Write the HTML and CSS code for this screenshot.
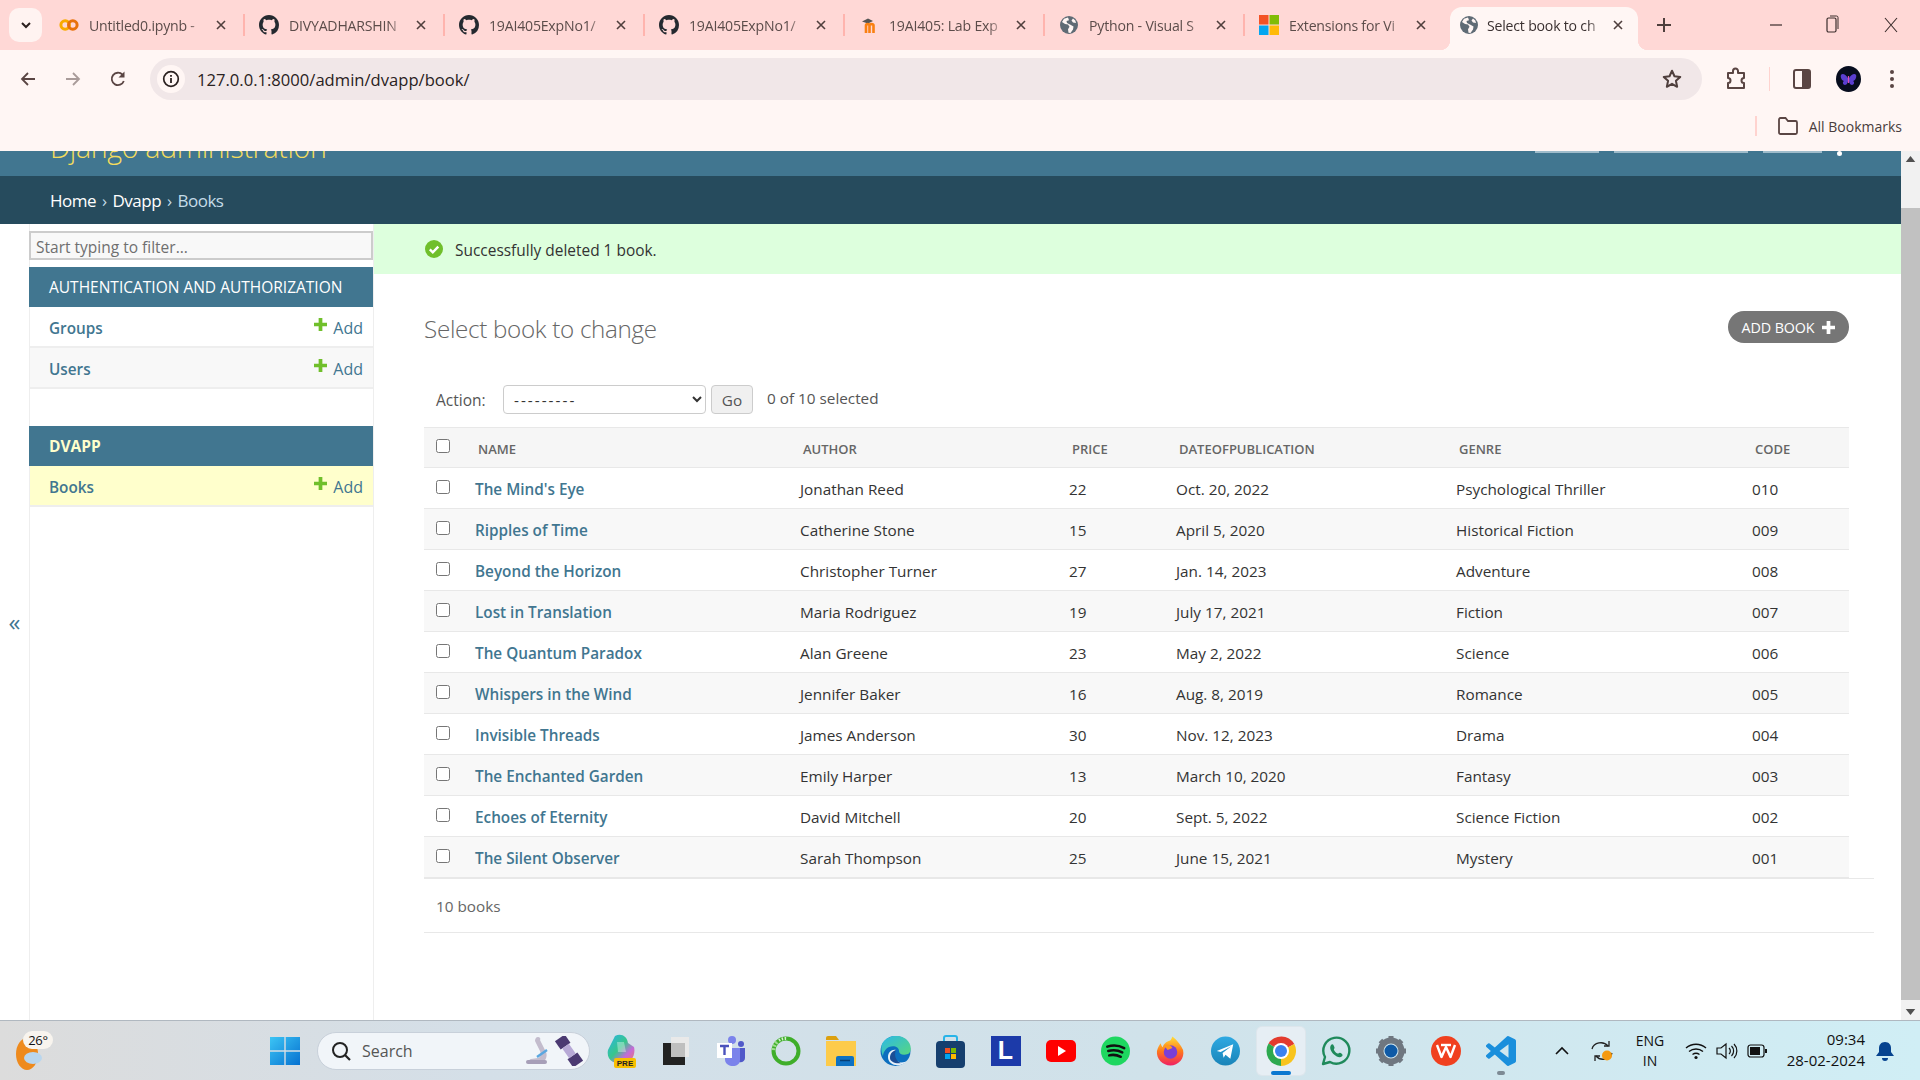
FILE: index.html
```html
<!DOCTYPE html>
<html lang="en">
<head>
<meta charset="utf-8">
<title>Select book to change | Django site admin</title>
<link rel="stylesheet" href="styles.css">
</head>
<body>
<svg class="defs" aria-hidden="true">
  <symbol id="gh" viewBox="0 0 16 16"><path fill="#24292f" d="M8 0C3.58 0 0 3.58 0 8c0 3.54 2.29 6.53 5.47 7.59.4.07.55-.17.55-.38 0-.19-.01-.82-.01-1.49-2.01.37-2.53-.49-2.69-.94-.09-.23-.48-.94-.82-1.13-.28-.15-.68-.52-.01-.53.63-.01 1.08.58 1.23.82.72 1.21 1.87.87 2.33.66.07-.52.28-.87.51-1.07-1.78-.2-3.64-.89-3.64-3.95 0-.87.31-1.59.82-2.15-.08-.2-.36-1.02.08-2.12 0 0 .67-.21 2.2.82.64-.18 1.32-.27 2-.27.68 0 1.36.09 2 .27 1.53-1.04 2.2-.82 2.2-.82.44 1.1.16 1.92.08 2.12.51.56.82 1.27.82 2.15 0 3.07-1.87 3.75-3.65 3.95.29.25.54.73.54 1.48 0 1.07-.01 1.93-.01 2.2 0 .21.15.46.55.38A8.013 8.013 0 0016 8c0-4.42-3.58-8-8-8z"/></symbol>
  <symbol id="globe" viewBox="0 0 20 20"><circle cx="10" cy="10" r="9" fill="#5f6b75"/><path fill="#fff6f4" d="M9 2.500 5 3.800 3 7l3 2 3 .5 1.500 2.200-1.500 2.500.5 3.500 2 .2 2.500-3.500.5-3-3.500-2L8 8l-.5-2L10 5.200zM14 3.500l-1.500 2 1.500 2 3 .5-.7-2.500z"/></symbol>
  <symbol id="close" viewBox="0 0 12 12"><path d="M2 2l8 8M10 2l-8 8" fill="none" stroke="#4f3f3d" stroke-width="1.600"/></symbol>
  <symbol id="plus" viewBox="0 0 14 14"><path d="M5 0h4v5h5v4H9v5H5V9H0V5h5z" fill="#70bf2b"/></symbol>
</svg>

<header class="tabstrip">
  <button class="tabsearch"><svg width="12" height="12" viewBox="0 0 12 12"><path d="M2 4l4 4 4-4" fill="none" stroke="#2b1f1e" stroke-width="2"/></svg></button>
  <div class="tab">
    <svg class="fav" viewBox="0 0 20 20"><circle cx="6.200" cy="10" r="4.300" fill="none" stroke="#f9ab00" stroke-width="3"/><circle cx="13.800" cy="10" r="4.300" fill="none" stroke="#e8710a" stroke-width="3"/></svg>
    <span class="tabtext">Untitled0.ipynb -</span>
    <svg class="tabx"><use href="#close"/></svg>
  </div>
  <i class="sep"></i>
  <div class="tab">
    <svg class="fav"><use href="#gh"/></svg>
    <span class="tabtext">DIVYADHARSHIN</span>
    <svg class="tabx"><use href="#close"/></svg>
  </div>
  <i class="sep"></i>
  <div class="tab">
    <svg class="fav"><use href="#gh"/></svg>
    <span class="tabtext">19AI405ExpNo1/</span>
    <svg class="tabx"><use href="#close"/></svg>
  </div>
  <i class="sep"></i>
  <div class="tab">
    <svg class="fav"><use href="#gh"/></svg>
    <span class="tabtext">19AI405ExpNo1/</span>
    <svg class="tabx"><use href="#close"/></svg>
  </div>
  <i class="sep"></i>
  <div class="tab">
    <svg class="fav" viewBox="0 0 20 20"><path d="M3 6.500 9 3.500l5 2.500-5 2.500z" fill="#555"/><path d="M7 18v-7.500c0-2 3.500-2 3.500 0V18M10.500 10.500c0-2 4-2 4 0V18" fill="none" stroke="#f98012" stroke-width="2.600"/></svg>
    <span class="tabtext">19AI405: Lab Exp</span>
    <svg class="tabx"><use href="#close"/></svg>
  </div>
  <i class="sep"></i>
  <div class="tab">
    <svg class="fav"><use href="#globe"/></svg>
    <span class="tabtext">Python - Visual S</span>
    <svg class="tabx"><use href="#close"/></svg>
  </div>
  <i class="sep"></i>
  <div class="tab">
    <svg class="fav" viewBox="0 0 20 20"><rect width="9.500" height="9.500" fill="#f35325"/><rect x="10.500" width="9.500" height="9.500" fill="#81bc06"/><rect y="10.500" width="9.500" height="9.500" fill="#05a6f0"/><rect x="10.500" y="10.500" width="9.500" height="9.500" fill="#ffba08"/></svg>
    <span class="tabtext">Extensions for Vi</span>
    <svg class="tabx"><use href="#close"/></svg>
  </div>
  <div class="tab active">
    <svg class="fav"><use href="#globe"/></svg>
    <span class="tabtext">Select book to ch</span>
    <svg class="tabx"><use href="#close"/></svg>
  </div>
  <svg class="newtab" viewBox="0 0 24 24"><path d="M12 5v14M5 12h14" stroke="#4f3f3d" stroke-width="2" fill="none"/></svg>
  <div class="winctl">
    <span class="winbtn"><svg width="14" height="14" viewBox="0 0 14 14"><path d="M1 7h12" stroke="#3a2c2b" stroke-width="1.200"/></svg></span>
    <span class="winbtn"><svg width="14" height="24" viewBox="0 0 14 24"><rect x="2" y="5" width="9" height="14" rx="1.500" fill="none" stroke="#3a2c2b" stroke-width="1.200"/><path d="M5 3h6.500a1.500 1.500 0 0 1 1.500 1.500V16" fill="none" stroke="#3a2c2b" stroke-width="1"/></svg></span>
    <span class="winbtn"><svg width="14" height="16" viewBox="0 0 14 16"><path d="M1 1l12 14M13 1L1 15" stroke="#3a2c2b" stroke-width="1.100" fill="none"/></svg></span>
  </div>
</header>

<section class="toolbar">
  <div class="navrow">
    <span class="navbtn"><svg width="18" height="18" viewBox="0 0 18 18"><path d="M16 9H3M9 3 3 9l6 6" fill="none" stroke="#5a4543" stroke-width="1.800"/></svg></span>
    <span class="navbtn"><svg width="18" height="18" viewBox="0 0 18 18"><path d="M2 9h13M9 3l6 6-6 6" fill="none" stroke="#a99b99" stroke-width="1.800"/></svg></span>
    <span class="navbtn"><svg width="18" height="18" viewBox="0 0 18 18"><path d="M14.800 11a6.200 6.200 0 1 1-1.300-6.300" fill="none" stroke="#5a4543" stroke-width="1.800"/><path d="M15.500 1.500v6h-6z" fill="#5a4543"/></svg></span>
    <div class="omnibox">
      <span class="siteinfo"><svg width="18" height="18" viewBox="0 0 18 18"><circle cx="9" cy="9" r="7.300" fill="none" stroke="#2b2120" stroke-width="1.700"/><path d="M9 8v5M9 5v1.800" stroke="#2b2120" stroke-width="1.800"/></svg></span>
      <span class="url">127.0.0.1:8000/admin/dvapp/book/</span>
      <svg class="star" width="22" height="22" viewBox="0 0 24 24"><path d="m12 3 2.700 6 6.300.7-4.700 4.300 1.300 6.500-5.600-3.300-5.600 3.300L7.700 14 3 9.700 9.300 9z" fill="none" stroke="#4f3f3d" stroke-width="2.200" stroke-linejoin="round"/></svg>
    </div>
    <div class="toolright">
      <span class="toolbtn"><svg width="22" height="24" viewBox="0 0 22 24"><path d="M3 6h5V4a2.500 2.500 0 0 1 5 0v2h6v5a2 2 0 0 0 0 5v5H3v-5a2.500 2.500 0 0 0 0-5z" fill="none" stroke="#5a4543" stroke-width="2" stroke-linejoin="round"/></svg></span>
      <i class="tooldiv"></i>
      <span class="toolbtn"><svg width="20" height="22" viewBox="0 0 20 22"><rect x="2" y="2" width="16" height="18" rx="2" fill="none" stroke="#5a4543" stroke-width="2"/><rect x="10" y="2" width="8" height="18" fill="#5a4543"/></svg></span>
      <span class="toolbtn avatarslot"><svg width="25" height="26" viewBox="0 0 25 26"><ellipse cx="12.500" cy="13" rx="12.500" ry="13" fill="#070d1e"/><path d="M12.500 13C10 8 6 7 5 9s1 6 3 6c-2 1-1 4 1 4s3-3 3.500-6c.5 3 1.500 6 3.500 6s3-3 1-4c2 0 4-4 3-6s-5-1-7.500 4z" fill="#5a3fd0"/><path d="M12.500 10v7" stroke="#e04fb0" stroke-width="1.200"/></svg></span>
      <span class="toolbtn"><svg width="6" height="20" viewBox="0 0 6 20"><circle cx="3" cy="3" r="2" fill="#5a4543"/><circle cx="3" cy="10" r="2" fill="#5a4543"/><circle cx="3" cy="17" r="2" fill="#5a4543"/></svg></span>
    </div>
  </div>
  <div class="bookmarks">
    <i class="bmdiv"></i>
    <svg class="bmfolder" width="22" height="20" viewBox="0 0 22 20"><path d="M2 3.500a1.500 1.500 0 0 1 1.500-1.500h5l2.500 3h7.500A1.500 1.500 0 0 1 20 6.500V16.500a1.500 1.500 0 0 1-1.500 1.500h-15A1.500 1.500 0 0 1 2 16.500z" fill="none" stroke="#5a4543" stroke-width="1.800"/></svg>
    <span class="bmtext">All Bookmarks</span>
  </div>
</section>

<div class="viewport">
  <div class="page">
    <div class="adminheader">
      <div class="branding">Django administration</div>
      <div class="usertools"><span class="ut1"></span><span class="ut2"></span><span class="ut3"></span><span class="ut4"></span></div>
    </div>
    <nav class="breadcrumbs"><a>Home</a> › <a>Dvapp</a> › <span>Books</span></nav>
    <div class="main">
      <div class="gutter"><span class="toggle">«</span></div>
      <aside class="sidebar">
        <input class="filter" type="text" placeholder="Start typing to filter...">
        <div class="appcaption">Authentication and Authorization</div>
        <div class="modelrow"><a class="modelname">Groups</a><a class="addlink"><svg class="plus"><use href="#plus"/></svg>Add</a></div>
        <div class="modelrow stripe"><a class="modelname">Users</a><a class="addlink"><svg class="plus"><use href="#plus"/></svg>Add</a></div>
        <div class="appcaption current">Dvapp</div>
        <div class="modelrow currentmodel"><a class="modelname">Books</a><a class="addlink"><svg class="plus"><use href="#plus"/></svg>Add</a></div>
      </aside>
      <main class="content">
        <div class="message"><svg width="18" height="18" viewBox="0 0 18 18"><circle cx="9" cy="9" r="9" fill="#70bf2b"/><path d="m4.800 9.300 3 3 5.500-5.700" fill="none" stroke="#fff" stroke-width="2.400"/></svg><span>Successfully deleted 1 book.</span></div>
        <div class="inner">
          <div class="titlerow">
            <h1>Select book to change</h1>
            <a class="addbtn">ADD BOOK<svg width="13" height="13" viewBox="0 0 14 14"><path d="M5 0h4v5h5v4H9v5H5V9H0V5h5z" fill="#fff"/></svg></a>
          </div>
          <div class="actions">
            <label class="actionlabel">Action:</label>
            <select class="actionselect"><option>---------</option></select>
            <button class="gobtn">Go</button>
            <span class="selected">0 of 10 selected</span>
          </div>
          <table class="results">
            <colgroup><col class="c0"><col class="c1"><col class="c2"><col class="c3"><col class="c4"><col class="c5"><col class="c6"></colgroup>
            <thead><tr><th><input type="checkbox"></th><th>Name</th><th>Author</th><th>Price</th><th>Dateofpublication</th><th>Genre</th><th>Code</th></tr></thead>
            <tbody>
              <tr><td><input type="checkbox"></td><td><a>The Mind's Eye</a></td><td>Jonathan Reed</td><td>22</td><td>Oct. 20, 2022</td><td>Psychological Thriller</td><td>010</td></tr>
              <tr><td><input type="checkbox"></td><td><a>Ripples of Time</a></td><td>Catherine Stone</td><td>15</td><td>April 5, 2020</td><td>Historical Fiction</td><td>009</td></tr>
              <tr><td><input type="checkbox"></td><td><a>Beyond the Horizon</a></td><td>Christopher Turner</td><td>27</td><td>Jan. 14, 2023</td><td>Adventure</td><td>008</td></tr>
              <tr><td><input type="checkbox"></td><td><a>Lost in Translation</a></td><td>Maria Rodriguez</td><td>19</td><td>July 17, 2021</td><td>Fiction</td><td>007</td></tr>
              <tr><td><input type="checkbox"></td><td><a>The Quantum Paradox</a></td><td>Alan Greene</td><td>23</td><td>May 2, 2022</td><td>Science</td><td>006</td></tr>
              <tr><td><input type="checkbox"></td><td><a>Whispers in the Wind</a></td><td>Jennifer Baker</td><td>16</td><td>Aug. 8, 2019</td><td>Romance</td><td>005</td></tr>
              <tr><td><input type="checkbox"></td><td><a>Invisible Threads</a></td><td>James Anderson</td><td>30</td><td>Nov. 12, 2023</td><td>Drama</td><td>004</td></tr>
              <tr><td><input type="checkbox"></td><td><a>The Enchanted Garden</a></td><td>Emily Harper</td><td>13</td><td>March 10, 2020</td><td>Fantasy</td><td>003</td></tr>
              <tr><td><input type="checkbox"></td><td><a>Echoes of Eternity</a></td><td>David Mitchell</td><td>20</td><td>Sept. 5, 2022</td><td>Science Fiction</td><td>002</td></tr>
              <tr><td><input type="checkbox"></td><td><a>The Silent Observer</a></td><td>Sarah Thompson</td><td>25</td><td>June 15, 2021</td><td>Mystery</td><td>001</td></tr>
            </tbody>
          </table>
          <div class="paginator">10 books</div>
        </div>
      </main>
    </div>
  </div>
  <div class="scrollbar">
    <span class="arrow up"></span>
    <span class="thumb"></span>
    <span class="arrow down"></span>
  </div>
</div>

<footer class="taskbar">
  <div class="weather">
    <svg width="32" height="34" viewBox="0 0 32 34"><ellipse cx="13" cy="17" rx="11" ry="16" fill="#ee8a1d"/><ellipse cx="19" cy="21" rx="9" ry="6" fill="#b9d6ee"/></svg>
    <span class="temp">26°</span>
  </div>
  <svg class="winlogo" width="30" height="30" viewBox="0 0 30 30"><defs><linearGradient id="wg" x1="0" y1="0" x2="1" y2="1"><stop offset="0" stop-color="#3cc5f5"/><stop offset="1" stop-color="#0671d0"/></linearGradient></defs><path fill="url(#wg)" d="M0 1h14.300v13.300H0zM15.700 1H30v13.300H15.700zM0 15.700h14.300V29H0zM15.700 15.700H30V29H15.700z"/></svg>
  <div class="search">
    <svg width="20" height="20" viewBox="0 0 20 20"><circle cx="9" cy="9" r="7" fill="none" stroke="#222" stroke-width="2"/><path d="m14 14 5 5" stroke="#222" stroke-width="2.200"/></svg>
    <span class="searchtext">Search</span>
    <svg class="searchart" width="58" height="30" viewBox="0 0 58 30"><path d="M13 1c2 0 3 2 2 3l6 12c2 5-1 10-5 10H7c-3 0-3-3-1-3l7-1c3-1 3-4 2-7L10 5c0-2 1-4 3-4z" fill="#c3bccd"/><rect x="1" y="24" width="21" height="4" rx="2" fill="#a79fb8"/><path d="m12 21 10-7" stroke="#5aa7e0" stroke-width="2.500"/><g transform="rotate(-35 44 15)"><rect x="38" y="-1" width="12" height="10" fill="#4b3a72"/><rect x="38" y="21" width="12" height="10" fill="#4b3a72"/><rect x="40" y="9" width="8" height="12" fill="#b7a9d6"/></g></svg>
  </div>
  <div class="pinned">
    <span class="pin"><svg width="30" height="34" viewBox="0 0 30 34"><defs><linearGradient id="cg" x1="0" y1="0" x2="1" y2="1"><stop offset="0" stop-color="#2bb4e8"/><stop offset=".45" stop-color="#38c68b"/><stop offset=".7" stop-color="#c56ad8"/><stop offset="1" stop-color="#f37c5a"/></linearGradient></defs><path d="M9 2c6-3 12 0 13 7l6 4c2 8-3 17-11 17C8 30 0 26 2 16z" fill="url(#cg)"/><path d="M11 8h7l2 10h-8z" fill="#fff" fill-opacity=".35"/><rect x="8" y="24" width="22" height="10" rx="2" fill="#f8c000"/><text x="19" y="32" class="pre">PRE</text></svg></span>
    <span class="pin"><svg width="26" height="28" viewBox="0 0 26 28"><rect x="8" y="0" width="18" height="20" fill="#e9e9e9"/><rect x="0" y="6" width="22" height="22" fill="#222"/><rect x="8" y="6" width="14" height="14" fill="#bfbfbf"/></svg></span>
    <span class="pin"><svg width="28" height="30" viewBox="0 0 28 30"><circle cx="15" cy="4" r="4" fill="#7b83eb"/><circle cx="24" cy="8" r="3" fill="#5059c9"/><path d="M20 12h8v10c0 3-3 5-6 4z" fill="#5059c9"/><path d="M8 12h15v12c0 8-14 8-15 0z" fill="#7b83eb"/><rect x="0" y="7" width="15" height="15" fill="#fff"/><path d="M3 10h9M7.500 10v9" stroke="#4b53bc" stroke-width="2.400"/></svg></span>
    <span class="pin"><svg width="30" height="30" viewBox="0 0 30 30"><circle cx="15" cy="15" r="12.500" fill="none" stroke="#3fae2a" stroke-width="4"/><path d="M6 6a12.500 12.500 0 0 0-3.500 9" fill="none" stroke="#9ddc8e" stroke-width="4" stroke-dasharray="2 1.500"/><path d="M8 4.500a12.500 12.500 0 0 1 8-2" fill="none" stroke="#d6efd0" stroke-width="3" stroke-dasharray="1.500 1.500"/></svg></span>
    <span class="pin"><svg width="31" height="30" viewBox="0 0 31 30"><path d="M1 2a2 2 0 0 1 2-2h8l3 4H1z" fill="#dca00f"/><path d="M1 5h30v25H1z" fill="#fdcb4a"/><path d="M11 22a2 2 0 0 1 2-2h14a2 2 0 0 1 2 2v8H11z" fill="#0f72c2"/><path d="M15 24.500h10" stroke="#063f74" stroke-width="1.500"/></svg></span>
    <span class="pin"><svg width="31" height="30" viewBox="0 0 31 30"><defs><linearGradient id="eg" x1="0" y1="0" x2="1" y2="1"><stop offset="0" stop-color="#2bb8e8"/><stop offset="1" stop-color="#59d87c"/></linearGradient></defs><circle cx="15.500" cy="15" r="15" fill="#0c6fbf"/><path d="M2 8C6 0 18-3 26 3c6 5 6 13 2 15-5 2-9 0-9-3 0-4-5-6-10-4-4 2-6 6-6 9-2-4-2-9-1-12z" fill="url(#eg)"/><path d="M8 21c0-5 4-8 8-7-4 2-3 10 3 12 3 1 6 0 8-1-6 7-19 5-19-4z" fill="#fff" fill-opacity=".9"/><path d="M10 22c0-5 3-7 6-8-2 4-1 11 5 13-5 1-11-1-11-5z" fill="#1b4e96"/></svg></span>
    <span class="pin"><svg width="29" height="34" viewBox="0 0 29 34"><path d="M8 9V4a2 2 0 0 1 2-2h9a2 2 0 0 1 2 2v5" fill="none" stroke="#28b4e8" stroke-width="2"/><rect y="7" width="29" height="27" rx="4" fill="#163f6e"/><rect x="9" y="14" width="5" height="5" fill="#f25022"/><rect x="15" y="14" width="5" height="5" fill="#7fba00"/><rect x="9" y="20" width="5" height="5" fill="#00a4ef"/><rect x="15" y="20" width="5" height="5" fill="#ffb900"/></svg></span>
    <span class="pin"><span class="lbox">L</span></span>
    <span class="pin"><svg width="30" height="22" viewBox="0 0 30 22"><rect width="30" height="22" rx="5" fill="#f00"/><path d="m12 6 8 5-8 5z" fill="#fff"/></svg></span>
    <span class="pin"><svg width="29" height="30" viewBox="0 0 30 30"><circle cx="15" cy="15" r="15" fill="#1ed760"/><path d="M6.500 10.500c6-2 12-1.500 17.500 1.500M7.500 15c5-1.500 10-1 14.500 1.500M8.500 19.500c4-1 8-.5 12 1.500" fill="none" stroke="#111" stroke-width="2.600" stroke-linecap="round"/></svg></span>
    <span class="pin"><svg width="29" height="30" viewBox="0 0 30 30"><defs><linearGradient id="ff" x1="0" y1="0" x2="0" y2="1"><stop offset="0" stop-color="#ffdf3a"/><stop offset=".5" stop-color="#ff7a1a"/><stop offset="1" stop-color="#f01f63"/></linearGradient></defs><path d="M17 0c5 4 9 9 11 14 2 9-5 16-13 16S0 23 1 15c1-4 3-7 4-8 0 2 1 3 2 4 1-4 5-6 8-7 1-1 1-2 2-4z" fill="url(#ff)"/><circle cx="15" cy="16" r="7" fill="#7a3fd6"/><path d="M8 9c4-2 8 0 9 3l-5 2c-1-2-3-3-4-5z" fill="#ff9a1f"/></svg></span>
    <span class="pin"><svg width="29" height="30" viewBox="0 0 30 30"><defs><linearGradient id="tg" x1="0" y1="0" x2="0" y2="1"><stop offset="0" stop-color="#2ea9e2"/><stop offset="1" stop-color="#1a84b8"/></linearGradient></defs><circle cx="15" cy="15" r="15" fill="url(#tg)"/><path d="m6 15 17-7-3 15-5-4-2 3-1-5 9-7-11 6z" fill="#fff"/></svg></span>
    <span class="pin pinactive"><svg width="30" height="30" viewBox="0 0 30 30"><path d="M15 15 2.500 7.500A15 15 0 0 1 28.300 8z" fill="#e33b2e"/><path d="M15 15l13.300-7A15 15 0 0 1 15 30z" fill="#f8c41d"/><path d="M15 15v15A15 15 0 0 1 2.500 7.500z" fill="#2da94f"/><circle cx="15" cy="15" r="8" fill="#fff"/><circle cx="15" cy="15" r="6" fill="#3b82ee"/></svg></span>
    <span class="pin"><svg width="30" height="30" viewBox="0 0 30 30"><path d="M2 28l2-7a13 13 0 1 1 5 5z" fill="none" stroke="#1f8a5b" stroke-width="2.400" stroke-linejoin="round"/><path d="M10 9c2-2 3 1 3.500 2.500.3 1-1 1.500-.5 2.500 1 1.800 2 2.800 3.500 3.500 1 .4 1.500-1 2.500-.7 1.500.5 3.500 2 2 3.500-2 2-5.500.5-8-1.800-3-2.800-5-6.500-3-9.500z" fill="#1f8a5b"/></svg></span>
    <span class="pin"><svg width="30" height="30" viewBox="0 0 30 30"><circle cx="15" cy="15" r="10.500" fill="none" stroke="#6f7780" stroke-width="6"/><path d="M15 0v6M15 24v6M0 15h6M24 15h6M4.400 4.400l4.200 4.200M21.400 21.400l4.200 4.200M4.400 25.600l4.200-4.200M21.400 8.600l4.200-4.200" stroke="#6f7780" stroke-width="5"/><circle cx="15" cy="15" r="6.500" fill="#0f5aa6"/></svg></span>
    <span class="pin"><svg width="30" height="30" viewBox="0 0 30 30"><circle cx="15" cy="15" r="15" fill="#f0401f"/><path d="M6 9l4.500 12L15 11l4.500 10L24 9" fill="none" stroke="#fff" stroke-width="2.400" stroke-linejoin="round"/><path d="M10 9h10" stroke="#fff" stroke-width="2.400"/></svg></span>
    <span class="pin pinopen"><svg width="30" height="30" viewBox="0 0 24 24"><path fill="#1a8fdc" d="M23.150 2.587L18.210.21a1.494 1.494 0 0 0-1.705.29l-9.460 8.630-4.120-3.128a.999.999 0 0 0-1.276.057L.327 7.261A1 1 0 0 0 .326 8.740L3.899 12 .326 15.260a1 1 0 0 0 .001 1.479L1.650 17.940a.999.999 0 0 0 1.276.057l4.120-3.128 9.460 8.630a1.492 1.492 0 0 0 1.704.29l4.942-2.377A1.500 1.500 0 0 0 24 20.060V3.939a1.500 1.500 0 0 0-.85-1.352zm-5.146 14.861L10.826 12l7.178-5.448v10.896z"/></svg></span>
  </div>
  <div class="tray">
    <svg class="caret" width="16" height="10" viewBox="0 0 16 10"><path d="m2 8 6-6 6 6" fill="none" stroke="#111" stroke-width="1.600"/></svg>
    <svg class="sync" width="22" height="22" viewBox="0 0 22 22"><path d="M1 9a9 8 0 0 1 16-3M21 13a9 8 0 0 1-16 3" fill="none" stroke="#222" stroke-width="1.300"/><path d="M18 1v5h-5M4 21v-5h5" fill="none" stroke="#222" stroke-width="1.300"/><circle cx="16" cy="15.500" r="5" fill="#f59a12"/></svg>
    <div class="lang"><span>ENG</span><span>IN</span></div>
    <svg class="trayicon" width="22" height="18" viewBox="0 0 22 18"><path d="M1 6a15 15 0 0 1 20 0M4 9.500a11 11 0 0 1 14 0M7.500 12.500a6 6 0 0 1 7 0" fill="none" stroke="#111" stroke-width="1.400"/><circle cx="11" cy="15.500" r="1.600" fill="#111"/></svg>
    <svg class="trayicon" width="22" height="18" viewBox="0 0 22 18"><path d="M1 6h4l5-4v14l-5-4H1z" fill="none" stroke="#111" stroke-width="1.200"/><path d="M13 6a4 4 0 0 1 0 6M15.500 4a7 7 0 0 1 0 10M18 2a10 10 0 0 1 0 14" fill="none" stroke="#111" stroke-width="1.200"/></svg>
    <svg class="trayicon" width="20" height="14" viewBox="0 0 20 14"><rect x="1" y="1" width="16" height="12" rx="2.500" fill="none" stroke="#111" stroke-width="1.200"/><rect x="3" y="3" width="10" height="8" fill="#111"/><rect x="18" y="5" width="2" height="4" fill="#111"/></svg>
    <div class="clock"><span>09:34</span><span>28-02-2024</span></div>
    <svg class="bell" width="18" height="20" viewBox="0 0 18 20"><path d="M9 1c4 0 6 3 6 6v4l3 4H0l3-4V7c0-3 2-6 6-6z" fill="#06438f"/><path d="M6 17a3 3 0 0 0 6 0z" fill="#06438f"/></svg>
  </div>
</footer>
</body>
</html>
```

FILE: styles.css
```css
* { box-sizing: border-box; }
html, body { margin: 0; height: 100%; }
body {
  height: 100vh;
  display: flex;
  flex-direction: column;
  overflow: hidden;
  font-family: "Open Sans", "Noto Sans", "Liberation Sans", sans-serif;
  font-size: 15.3px;
  color: #333;
  background: #fff;
}
.defs { width: 0; height: 0; position: absolute; }

/* browser tabs */
.tabstrip { height: 50px; flex: none; display: flex; align-items: flex-start; background: #ffd8d6; padding-left: 9px; }
.tabsearch { width: 33px; height: 34px; margin: 8px 3px 0 0; border: 0; border-radius: 10px; background: #fff3f1; display: flex; align-items: center; justify-content: center; padding: 0; }
.tab { width: 198px; height: 43px; margin-top: 7px; padding: 0 0 7px 14px; display: flex; align-items: center; gap: 10px; flex: none; font-size: 14.1px; color: #5c4c4a; position: relative; }
.fav { width: 20px; height: 20px; flex: none; }
.tabtext { width: 116px; flex: none; overflow: hidden; white-space: nowrap; letter-spacing: -.2px; -webkit-mask-image: linear-gradient(90deg, #000 86%, transparent 100%); mask-image: linear-gradient(90deg, #000 86%, transparent 100%); }
.tabx { width: 12px; height: 12px; flex: none; }
.sep { width: 2px; height: 22px; margin-top: 14px; background: #ffb4ae; flex: none; }
.tab.active { width: 188px; margin-left: 7px; padding-left: 9px; gap: 8px; background: #fff6f4; border-radius: 12px 12px 0 0; color: #3a3030; }
.tab.active .tabtext { width: 117px; }
.tab.active::before, .tab.active::after { content: ""; position: absolute; bottom: 0; width: 10px; height: 10px; }
.tab.active::before { left: -10px; background: radial-gradient(circle at 0 0, transparent 10px, #fff6f4 10.5px); }
.tab.active::after { right: -10px; background: radial-gradient(circle at 100% 0, transparent 10px, #fff6f4 10.5px); }
.newtab { width: 24px; height: 24px; margin: 13px 0 0 14px; flex: none; }
.winctl { margin-left: auto; display: flex; padding-right: 1px; }
.winbtn { width: 56px; height: 50px; display: flex; align-items: center; justify-content: center; }
.winbtn:nth-child(2) { margin-right: 3px; }

/* browser toolbar */
.toolbar { height: 101px; flex: none; background: #fff6f4; display: flex; flex-direction: column; }
.navrow { display: flex; align-items: center; height: 42px; margin-top: 8px; padding-left: 5px; }
.navbtn { width: 45px; height: 42px; display: flex; align-items: center; justify-content: center; flex: none; }
.omnibox { flex: 1; height: 42px; margin-left: 10px; border-radius: 21px; background: #f1e7e8; display: flex; align-items: center; padding: 0 19px 0 7px; }
.siteinfo { width: 28px; height: 28px; border-radius: 50%; background: #fff6f4; display: flex; align-items: center; justify-content: center; }
.url { margin-left: 12px; font-size: 16.6px; color: #2a2222; }
.star { margin-left: auto; }
.toolright { width: 218px; flex: none; display: flex; align-items: center; padding-left: 12px; }
.toolbtn { width: 44px; height: 42px; display: flex; align-items: center; justify-content: center; flex: none; }
.tooldiv { width: 1px; height: 24px; margin: 0 10px 0 11px; background: #ffd3cf; flex: none; }
.avatarslot { margin-left: 2px; }
.bookmarks { display: flex; align-items: center; justify-content: flex-end; height: 30px; margin-top: 11px; padding-right: 18px; }
.bmdiv { width: 2px; height: 20px; background: #ffd3cf; margin-right: 20px; }
.bmfolder { margin-right: 10px; }
.bmtext { font-size: 14px; color: #4a3d3c; }

/* page */
.viewport { flex: 1; min-height: 0; display: flex; }
.page { flex: 1; min-width: 0; display: flex; flex-direction: column; }
.adminheader { height: 25px; flex: none; background: #417690; display: flex; align-items: flex-end; justify-content: space-between; overflow: hidden; }
.branding { margin: 0 0 9px 50px; height: 41px; line-height: 41px; flex: none; font-size: 28.6px; font-weight: 300; color: #f5dd5d; letter-spacing: -.35px; white-space: nowrap; }
.usertools { align-self: flex-start; display: flex; gap: 15px; padding-right: 59px; }
.usertools span { height: 2px; background: #9fbccb; display: block; }
.ut1 { width: 64px; }
.ut2 { width: 134px; }
.ut3 { width: 59px; }
.ut4 { width: 5px; height: 5px !important; border-radius: 50%; background: #fff !important; }
.breadcrumbs { height: 48px; flex: none; background: #264b5d; display: flex; align-items: center; gap: 2px; padding-left: 50px; color: #c4dce8; font-size: 17px; letter-spacing: -.5px; white-space: pre; }
.breadcrumbs a { color: #fff; }
.main { flex: 1; min-height: 0; display: flex; }
.gutter { width: 29px; flex: none; display: flex; align-items: center; justify-content: center; }
.toggle { color: #417690; font-size: 24px; line-height: 1; }
.sidebar { width: 345px; flex: none; border-left: 1px solid #eee; border-right: 1px solid #eee; padding-top: 7px; display: flex; flex-direction: column; }
.filter { width: 344px; height: 29px; margin-left: -1px; border: 2px solid #ccc; background: #f8f8f8; padding: 2px 5px 0; font: inherit; font-size: 15.5px; outline: 0; }
.filter::placeholder { color: #6f6f6f; opacity: 1; }
.appcaption { height: 40px; margin: 7px 0 0 -1px; padding-left: 20px; background: #417690; color: #fff; display: flex; align-items: center; text-transform: uppercase; font-size: 15.5px; }
.appcaption.current { margin-top: 37px; font-weight: 700; color: #ffc; }
.modelrow { height: 41px; padding: 2px 10px 0 19px; border-bottom: 2px solid #eee; display: flex; align-items: center; justify-content: space-between; }
.modelrow.stripe { background: #f8f8f8; }
.modelrow.currentmodel { background: #ffc; }
.modelname { color: #417690; font-weight: 600; }
.addlink { color: #417690; display: flex; align-items: center; gap: 6px; font-size: 16px; }
.plus { width: 13px; height: 13px; margin-top: -6px; }

.content { flex: 1; min-width: 0; display: flex; flex-direction: column; }
.message { height: 50px; flex: none; background: #dfd; display: flex; align-items: center; gap: 12px; padding-left: 51px; font-size: 15.45px; color: #333; }
.message span { padding-top: 1px; }
.inner { width: 1450px; margin-left: 50px; padding-top: 37px; }
.titlerow { width: 1425px; display: flex; justify-content: space-between; align-items: flex-start; }
h1 { margin: 1px 0 0; font-size: 24.2px; line-height: 34px; font-weight: 300; color: #666; letter-spacing: -.3px; }
.addbtn { width: 121px; height: 32px; border-radius: 16px; background: #767676; color: #fff; display: flex; align-items: center; justify-content: center; gap: 8px; font-size: 14.3px; letter-spacing: -.1px; }
.actions { display: flex; align-items: center; height: 29px; margin-top: 39px; padding-left: 12px; }
.actionlabel { width: 67px; color: #555; font-size: 15.5px; }
.actionselect { width: 203px; height: 29px; border: 1px solid #ccc; border-radius: 4px; background: #fff; padding: 0 6px; font: inherit; color: #333; letter-spacing: 2px; }
.gobtn { width: 42px; height: 29px; margin-left: 5px; border: 1px solid #ccc; border-radius: 4px; background: #f0f0f0; padding: 0; font: inherit; color: #555; }
.selected { margin: -4px 0 0 14px; color: #555; }
.results { table-layout: fixed; width: 1425px; margin-top: 13px; border-collapse: collapse; }
.c0 { width: 43px; }
.c1 { width: 325px; }
.c2 { width: 269px; }
.c3 { width: 107px; }
.c4 { width: 280px; }
.c5 { width: 296px; }
.c6 { width: 105px; }
.results th { height: 40px; padding: 2px 0 0 11px; text-align: left; background: #f6f6f6; border-top: 1px solid #e8e8e8; border-bottom: 1px solid #e8e8e8; font-size: 13px; font-weight: 600; color: #666; text-transform: uppercase; }
.results td { height: 41px; padding: 2px 0 0 8px; border-bottom: 1px solid #e8e8e8; white-space: nowrap; color: #333; }
.results tbody tr:nth-child(even) td { background: #f8f8f8; }
.results td a { color: #417690; font-weight: 600; }
.results input { display: block; width: 14px; height: 14px; margin: -5px 0 0 4px; }
.results th:first-child, .results td:first-child { padding-left: 8px; }
.paginator { height: 55px; border-top: 1px solid #e8e8e8; border-bottom: 1px solid #e8e8e8; display: flex; align-items: center; padding-left: 12px; color: #666; }

.scrollbar { width: 19px; flex: none; background: #f1f1f1; display: flex; flex-direction: column; align-items: stretch; }
.thumb { flex: 1; margin: 40px 0 3px; background: #c1c1c1; }
.arrow { height: 17px; display: block; flex: none; background: #505050; }
.arrow.up { clip-path: polygon(50% 30%, 75% 65%, 25% 65%); }
.arrow.down { clip-path: polygon(25% 35%, 75% 35%, 50% 70%); }

/* taskbar */
.taskbar { height: 60px; flex: none; display: flex; align-items: center; border-top: 1px solid #b0b8c0; background: linear-gradient(90deg, #dcdcdc 0%, #d4dfe8 25%, #d0e2ea 60%, #d0eef5 100%); padding-left: 14px; }
.weather { width: 256px; height: 40px; flex: none; position: relative; display: flex; align-items: flex-end; }
.temp { position: absolute; left: 9px; top: 0; width: 30px; height: 18px; border-radius: 9px; background: #f8f4ee; font-size: 13px; line-height: 18px; text-align: center; color: #111; letter-spacing: -.3px; }
.winlogo { flex: none; }
.search { width: 273px; height: 38px; flex: none; margin-left: 17px; border-radius: 19px; background: #f1f5f9; border: 1px solid #c8d0da; display: flex; align-items: center; padding-left: 13px; }
.searchtext { margin-left: 11px; font-size: 16px; color: #555; }
.searchart { margin-left: auto; margin-right: 6px; }
.pinned { display: flex; margin-left: 3px; width: 935px; flex: none; }
.pin { width: 55px; height: 48px; flex: none; display: flex; align-items: center; justify-content: center; position: relative; }
.pre { font-family: "Liberation Sans", sans-serif; font-size: 8px; font-weight: 700; text-anchor: middle; fill: #222; }
.lbox { width: 30px; height: 30px; background: #1c3aa9; color: #fff; display: flex; align-items: center; justify-content: center; font-family: "Liberation Sans", sans-serif; font-size: 25px; font-weight: 700; }
.pinactive { width: 48px; margin: 0 3.500px; background: #e6eef4; border-radius: 5px; box-shadow: 0 0 0 1px #dde6ec; }
.pinactive::after { content: ""; position: absolute; left: 14px; bottom: 0; width: 20px; height: 4px; border-radius: 2px; background: #0b78d0; }
.pinopen::after { content: ""; position: absolute; left: 24px; bottom: 0; width: 8px; height: 4px; border-radius: 2px; background: #7d8a94; }
.tray { flex: 1; display: flex; align-items: center; color: #111; }
.caret { margin-left: 26px; }
.sync { margin-left: 21px; }
.lang { width: 48px; margin-left: 13px; display: flex; flex-direction: column; align-items: center; font-size: 14px; line-height: 20px; }
.trayicon { margin-left: 9px; }
.tray .lang + .trayicon { margin-left: 11px; }
.clock { width: 96px; margin-left: 2px; margin-top: -2px; display: flex; flex-direction: column; align-items: flex-end; font-size: 15px; line-height: 21px; }
.bell { margin-left: 11px; }
```
